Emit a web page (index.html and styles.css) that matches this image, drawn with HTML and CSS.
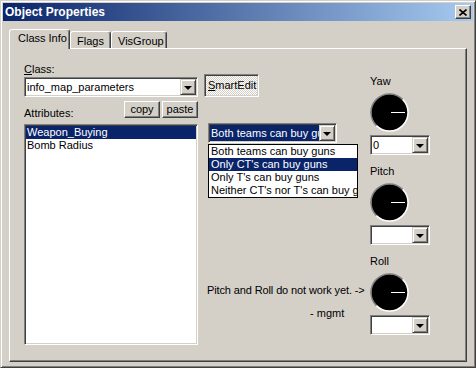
FILE: index.html
```html
<!DOCTYPE html>
<html>
<head>
    <title>Object Properties</title>
    <meta charset="UTF-8">
    <link rel="stylesheet" href="styles.css">
</head>
<body>
    <div class="window">
        <div class="titlebar">
            <span class="title">Object Properties</span>
            <span class="close">
                <svg width="8" height="7" viewBox="0 0 8 7"><path d="M0.5 0.5 L7.5 6.5 M7.5 0.5 L0.5 6.5" stroke="#000" stroke-width="1.6" fill="none"/></svg>
            </span>
        </div>

        <div class="content">
            <div class="tabs">
                <div class="tab active tab-class">Class Info</div>
                <div class="tab tab-flags">Flags</div>
                <div class="tab tab-vis">VisGroup</div>
            </div>

            <div class="panel">
                <div class="col-left">
                    <div class="label"><u>C</u>lass:</div>
                    <div class="combo class-combo">
                        <span class="field">info_map_parameters</span>
                        <span class="drop"><i class="arrow"></i></span>
                    </div>
                    <div class="attr-row">
                        <span class="attr-label">Attributes:</span>
                        <div class="btns">
                            <span class="btn">copy</span>
                            <span class="btn">paste</span>
                        </div>
                    </div>
                    <div class="listbox">
                        <div class="item selected">Weapon_Buying</div>
                        <div class="item">Bomb Radius</div>
                    </div>
                </div>

                <div class="col-mid">
                    <span class="smartedit"><u>S</u>martEdit</span>
                    <div class="combo value-combo">
                        <span class="field"><span class="hl">Both teams can buy guns</span></span>
                        <span class="drop"><i class="arrow"></i></span>
                        <div class="droplist">
                            <div class="opt">Both teams can buy guns</div>
                            <div class="opt selected">Only CT's can buy guns</div>
                            <div class="opt">Only T's can buy guns</div>
                            <div class="opt">Neither CT's nor T's can buy guns</div>
                        </div>
                    </div>
                    <div class="note">Pitch and Roll do not work yet. -&gt;</div>
                    <div class="sig">- mgmt</div>
                </div>

                <div class="col-right">
                    <div class="angle">
                        <div class="label">Yaw</div>
                        <svg class="dial" width="39" height="39" viewBox="0 0 39 39">
                            <circle cx="19.5" cy="19.5" r="18.5" fill="#000"/>
                            <path d="M6.4 32.6 A18.5 18.5 0 0 1 32.6 6.4" stroke="#808080" stroke-width="1.5" fill="none"/>
                            <path d="M32.6 6.4 A18.5 18.5 0 0 1 6.4 32.6" stroke="#fff" stroke-width="1.5" fill="none"/>
                            <line x1="21" y1="19.5" x2="35" y2="19.5" stroke="#fff"/>
                            <line x1="0" y1="19.5" x2="2" y2="19.5" stroke="#808080"/>
                        </svg>
                        <div class="combo small-combo">
                            <span class="field">0</span>
                            <span class="drop"><i class="arrow"></i></span>
                        </div>
                    </div>
                    <div class="angle">
                        <div class="label">Pitch</div>
                        <svg class="dial" width="39" height="39" viewBox="0 0 39 39">
                            <circle cx="19.5" cy="19.5" r="18.5" fill="#000"/>
                            <path d="M6.4 32.6 A18.5 18.5 0 0 1 32.6 6.4" stroke="#808080" stroke-width="1.5" fill="none"/>
                            <path d="M32.6 6.4 A18.5 18.5 0 0 1 6.4 32.6" stroke="#fff" stroke-width="1.5" fill="none"/>
                            <line x1="21" y1="19.5" x2="35" y2="19.5" stroke="#fff"/>
                            <line x1="0" y1="19.5" x2="2" y2="19.5" stroke="#808080"/>
                        </svg>
                        <div class="combo small-combo">
                            <span class="field"></span>
                            <span class="drop"><i class="arrow"></i></span>
                        </div>
                    </div>
                    <div class="angle">
                        <div class="label">Roll</div>
                        <svg class="dial" width="39" height="39" viewBox="0 0 39 39">
                            <circle cx="19.5" cy="19.5" r="18.5" fill="#000"/>
                            <path d="M6.4 32.6 A18.5 18.5 0 0 1 32.6 6.4" stroke="#808080" stroke-width="1.5" fill="none"/>
                            <path d="M32.6 6.4 A18.5 18.5 0 0 1 6.4 32.6" stroke="#fff" stroke-width="1.5" fill="none"/>
                            <line x1="21" y1="19.5" x2="35" y2="19.5" stroke="#fff"/>
                            <line x1="0" y1="19.5" x2="2" y2="19.5" stroke="#808080"/>
                        </svg>
                        <div class="combo small-combo">
                            <span class="field"></span>
                            <span class="drop"><i class="arrow"></i></span>
                        </div>
                    </div>
                </div>
            </div>
        </div>
    </div>
</body>
</html>
```

FILE: styles.css
```css
* {
    box-sizing: border-box;
}
body {
    margin: 0;
    font-family: 'Liberation Sans', Arial, sans-serif;
    font-size: 11px;
    line-height: 13px;
    color: #000000;
    background: #d4d0c8; /* classic grey */
}
.window {
    width: 476px;
    height: 368px;
    padding: 2px;
    background: #d4d0c8;
    border: 1px solid;
    border-color: #d4d0c8 #404040 #404040 #d4d0c8;
    box-shadow: inset 1px 1px #ffffff, inset -1px -1px #808080;
}
.titlebar {
    height: 18px;
    padding: 0 2px;
    display: flex;
    align-items: center;
    justify-content: space-between;
    background: linear-gradient(to right, #0a246a, #a6caf0);
    color: #ffffff;
}
.title {
    font-weight: bold;
    font-size: 12px;
}
.close {
    width: 16px;
    height: 14px;
    display: flex;
    align-items: center;
    justify-content: center;
    background: #d4d0c8;
    border: 1px solid;
    border-color: #ffffff #404040 #404040 #ffffff;
    box-shadow: inset -1px -1px #808080;
}
.content {
    padding: 8px 0 0 6px;
}

/* tabs */
.tabs {
    display: flex;
    align-items: flex-end;
    height: 19px;
    position: relative;
    z-index: 1;
}
.tab {
    height: 17px;
    padding: 3px 0 0 6px;
    background: #d4d0c8;
    border: 1px solid;
    border-bottom: none;
    border-color: #ffffff #404040 #404040 #ffffff;
    box-shadow: inset -1px 0 #808080;
    border-radius: 3px 3px 0 0;
}
.tab.active {
    height: 20px;
    margin-bottom: -1px;
    padding: 2px 0 0 8px;
}
.tab-class { width: 61px; }
.tab-flags { width: 41px; }
.tab-vis { width: 56px; }

.panel {
    width: 458px;
    height: 314px;
    padding: 14px 0 0 14px;
    display: flex;
    border: 1px solid;
    border-color: #ffffff #404040 #404040 #ffffff;
    box-shadow: inset -1px -1px #808080;
}

/* shared controls */
.combo {
    display: flex;
    height: 20px;
    padding: 1px;
    background: #ffffff;
    border: 1px solid;
    border-color: #808080 #ffffff #ffffff #808080;
    box-shadow: inset 1px 1px #404040, inset -1px -1px #d4d0c8;
}
.field {
    flex: 1;
    padding-left: 1px;
    line-height: 16px;
    white-space: nowrap;
    overflow: hidden;
}
.drop {
    width: 16px;
    height: 16px;
    display: flex;
    align-items: center;
    justify-content: center;
    background: #d4d0c8;
    border: 1px solid;
    border-color: #d4d0c8 #404040 #404040 #d4d0c8;
    box-shadow: inset 1px 1px #ffffff, inset -1px -1px #808080;
}
.arrow {
    width: 0;
    height: 0;
    border-left: 4px solid transparent;
    border-right: 4px solid transparent;
    border-top: 4px solid #000000;
    margin-top: 1px;
}
.btn {
    height: 17px;
    width: 36px;
    text-align: center;
    line-height: 15px;
    background: #d4d0c8;
    border: 1px solid;
    border-color: #ffffff #404040 #404040 #ffffff;
    box-shadow: inset -1px -1px #808080;
}

/* left column */
.col-left {
    width: 174px;
    display: flex;
    flex-direction: column;
}
.class-combo {
    margin-top: 1px;
}
.attr-row {
    margin-top: 4px;
    display: flex;
    justify-content: space-between;
    align-items: flex-start;
}
.attr-label {
    margin-top: 6px;
}
.btns {
    display: flex;
    gap: 2px;
}
.listbox {
    margin-top: 4px;
    height: 221px;
    background: #ffffff;
    border: 1px solid;
    border-color: #808080 #ffffff #ffffff #808080;
    box-shadow: inset 1px 1px #404040, inset -1px -1px #d4d0c8;
    padding: 1px;
}
.item {
    height: 13px;
    padding-left: 1px;
}
.selected {
    background: #0a246a;
    color: #ffffff;
}

/* middle column */
.col-mid {
    width: 166px;
    margin-left: 6px;
    display: flex;
    flex-direction: column;
    align-items: flex-start;
}
.smartedit {
    margin-top: 11px;
    width: 55px;
    height: 23px;
    padding-left: 3px;
    line-height: 21px;
    border: 1px solid;
    border-color: #808080 #ffffff #ffffff #808080;
    box-shadow: inset 1px 1px #404040, inset -1px -1px #d4d0c8;
    background: repeating-conic-gradient(#ffffff 0 25%, #d4d0c8 0 50%) 0 0 / 2px 2px;
}
.value-combo {
    position: relative;
    margin: 26px 0 0 4px;
    width: 129px;
}
.hl {
    display: block;
    background: #0a246a;
    color: #ffffff;
    padding-left: 1px;
    overflow: hidden;
}
.value-combo .field {
    padding-left: 0;
}
.droplist {
    position: absolute;
    top: 20px;
    left: -1px;
    width: 150px;
    background: #ffffff;
    border: 1px solid #000000;
    z-index: 2;
}
.opt {
    height: 13px;
    padding-left: 2px;
    white-space: nowrap;
    overflow: hidden;
}
.note {
    margin-top: 141px;
    padding-left: 3px;
    white-space: nowrap;
    letter-spacing: -0.12px;
}
.sig {
    margin-top: 10px;
    padding-left: 106px;
}

/* right column */
.col-right {
    width: 60px;
    padding-top: 12px;
    display: flex;
    flex-direction: column;
    gap: 10px;
}
.angle {
    display: flex;
    flex-direction: column;
}
.dial {
    display: block;
    margin: 5px 0 3px;
}
.small-combo {
    width: 60px;
}
```
